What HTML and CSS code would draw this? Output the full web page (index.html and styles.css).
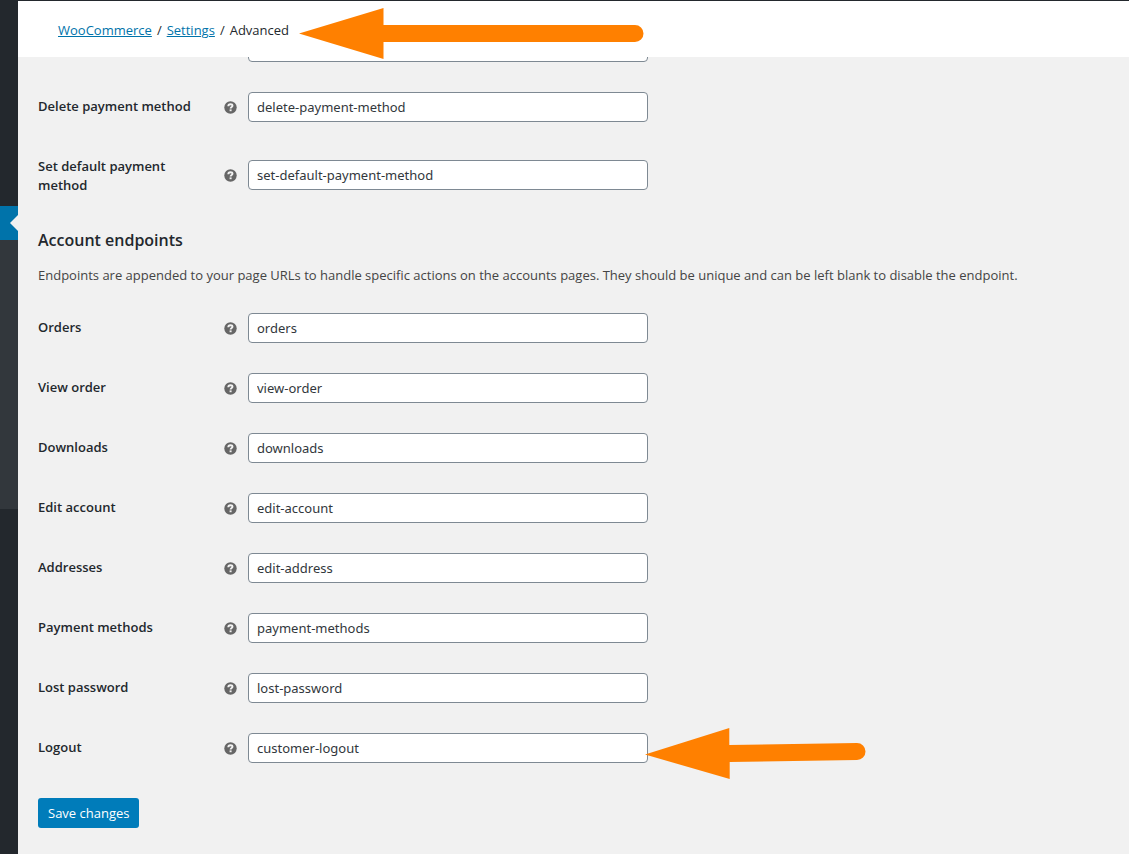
FILE: index.html
```html
<!DOCTYPE html>
<html lang="en">
<head>
  <meta charset="UTF-8" />
  <meta name="viewport" content="width=device-width, initial-scale=1.0" />
  <title>WooCommerce settings - Advanced</title>
  <link rel="stylesheet" href="styles.css">
</head>

<body>
  <svg class="sprite" aria-hidden="true">
    <symbol id="icon-help" viewBox="0 0 13 13">
      <circle cx="6.5" cy="6.5" r="6.2" fill="#666" />
      <path d="M4.3 5.2C4.3 3.900 5.200 3.200 6.500 3.200C7.900 3.200 8.500 3.900 8.500 4.700C8.500 6 6.600 6 6.600 7.600" fill="none" stroke="#f1f1f1" stroke-width="1.9" />
      <rect x="5.6" y="8.4" width="2" height="1.800" fill="#f1f1f1" />
    </symbol>
  </svg>

  <div class="admin-menu">
    <div class="menu-top"></div>
    <div class="menu-current"></div>
    <div class="menu-sub"></div>
  </div>

  <div class="content">
    <header class="page-header">
      <nav class="breadcrumbs" aria-label="Breadcrumb">
        <a href="#">WooCommerce</a>
        <span>/</span>
        <a href="#">Settings</a>
        <span>/</span>
        <span>Advanced</span>
      </nav>
      <svg class="arrow arrow-header" width="345" height="52" viewBox="0 0 345 52" aria-hidden="true">
        <path d="M0 25.5L84.500 0V17H336A8.500 8.500 0 0 1 336 34H84.500V51Z" fill="#ff8000" />
      </svg>
    </header>

    <form class="settings" action="#" onsubmit="return false">
      <table class="form-table">
        <tr>
          <th scope="row"></th>
          <td><div class="field"><svg class="help"><use href="#icon-help" /></svg><input type="text" aria-label="Endpoint" value=""></div></td>
        </tr>
        <tr>
          <th scope="row"><label for="delete_payment_method">Delete payment method</label></th>
          <td><div class="field"><svg class="help"><use href="#icon-help" /></svg><input type="text" id="delete_payment_method" value="delete-payment-method"></div></td>
        </tr>
        <tr>
          <th scope="row"><label for="set_default_payment_method">Set default payment method</label></th>
          <td><div class="field"><svg class="help"><use href="#icon-help" /></svg><input type="text" id="set_default_payment_method" value="set-default-payment-method"></div></td>
        </tr>
      </table>

      <h2>Account endpoints</h2>
      <p>Endpoints are appended to your page URLs to handle specific actions on the accounts pages. They should be unique and can be left blank to disable the endpoint.</p>

      <table class="form-table">
        <tr>
          <th scope="row"><label for="orders">Orders</label></th>
          <td><div class="field"><svg class="help"><use href="#icon-help" /></svg><input type="text" id="orders" value="orders"></div></td>
        </tr>
        <tr>
          <th scope="row"><label for="view_order">View order</label></th>
          <td><div class="field"><svg class="help"><use href="#icon-help" /></svg><input type="text" id="view_order" value="view-order"></div></td>
        </tr>
        <tr>
          <th scope="row"><label for="downloads">Downloads</label></th>
          <td><div class="field"><svg class="help"><use href="#icon-help" /></svg><input type="text" id="downloads" value="downloads"></div></td>
        </tr>
        <tr>
          <th scope="row"><label for="edit_account">Edit account</label></th>
          <td><div class="field"><svg class="help"><use href="#icon-help" /></svg><input type="text" id="edit_account" value="edit-account"></div></td>
        </tr>
        <tr>
          <th scope="row"><label for="edit_address">Addresses</label></th>
          <td><div class="field"><svg class="help"><use href="#icon-help" /></svg><input type="text" id="edit_address" value="edit-address"></div></td>
        </tr>
        <tr>
          <th scope="row"><label for="payment_methods">Payment methods</label></th>
          <td><div class="field"><svg class="help"><use href="#icon-help" /></svg><input type="text" id="payment_methods" value="payment-methods"></div></td>
        </tr>
        <tr>
          <th scope="row"><label for="lost_password">Lost password</label></th>
          <td><div class="field"><svg class="help"><use href="#icon-help" /></svg><input type="text" id="lost_password" value="lost-password"></div></td>
        </tr>
        <tr>
          <th scope="row"><label for="logout">Logout</label></th>
          <td>
            <div class="field">
              <svg class="help"><use href="#icon-help" /></svg><input type="text" id="logout" value="customer-logout">
              <svg class="arrow arrow-logout" width="221" height="52" viewBox="0 0 221 52" aria-hidden="true">
                <path d="M0 26.500L84.300 0V17L212 15A8.500 8.500 0 0 1 212 32L84.700 34V51Z" fill="#ff8000" />
              </svg>
            </div>
          </td>
        </tr>
      </table>

      <button type="submit" class="button-primary">Save changes</button>
    </form>
  </div>
</body>
</html>
```

FILE: styles.css
```css
* {
  box-sizing: border-box;
}

body {
  margin: 0;
  min-height: 100vh;
  display: flex;
  background: #f1f1f1;
  color: #444;
  font-family: "Open Sans", "Noto Sans", sans-serif;
  font-size: 13px;
  line-height: 20px;
}

.sprite {
  display: none;
}

/* collapsed admin menu */
.admin-menu {
  flex: none;
  width: 18px;
  background: #23282d;
}

.menu-top {
  height: 206px;
}

.menu-current {
  height: 34px;
  background: #0073aa;
  display: flex;
  align-items: center;
  justify-content: flex-end;
}

.menu-current::after {
  content: "";
  border: 8px solid transparent;
  border-left: 0;
  border-right-color: #f1f1f1;
}

.menu-sub {
  height: 269px;
  background: #32373c;
}

.content {
  flex: 1;
  min-width: 0;
}

.page-header {
  position: fixed;
  top: 0;
  left: 18px;
  right: 0;
  z-index: 10;
  height: 57px;
  padding: 2px 40px 0;
  display: flex;
  align-items: center;
  background: #fff;
  border-top: 1px solid #23282d;
}

.breadcrumbs {
  display: flex;
  gap: 5px;
  color: #23282d;
}

.breadcrumbs a {
  color: #0073aa;
}

.arrow {
  position: absolute;
}

.arrow-header {
  left: 281px;
  top: 7px;
}

.settings {
  padding: 17px 20px 20px;
}

.form-table {
  width: 100%;
  border-collapse: collapse;
}

.form-table th {
  width: 186px;
  padding: 20px 24px 18px 0;
  vertical-align: top;
  text-align: left;
  color: #23282d;
  font-weight: 600;
  line-height: 19px;
}

.form-table td {
  padding: 15px 0;
  vertical-align: middle;
}

.form-table label {
  display: block;
}

.field {
  position: relative;
  display: flex;
  align-items: center;
  gap: 11px;
}

.help {
  flex: none;
  width: 13px;
  height: 13px;
}

.field input {
  width: 400px;
  height: 30px;
  padding: 0 8px;
  border: 1px solid #7e8993;
  border-radius: 4px;
  background: #fff;
  color: #32373c;
  font-family: "Noto Sans", "Open Sans", sans-serif;
  font-size: 13px;
}

.arrow-logout {
  left: 421px;
  top: -5px;
}

h2 {
  margin: 16px 0 14px;
  color: #23282d;
  font-size: 16px;
  font-weight: 600;
  line-height: 22px;
}

p {
  margin: 0 0 13px;
}

.button-primary {
  display: block;
  height: 30px;
  margin-top: 20px;
  padding: 0 10px;
  border: 0;
  border-radius: 3px;
  background: #007cba;
  color: #fff;
  font: inherit;
  cursor: pointer;
}
```
